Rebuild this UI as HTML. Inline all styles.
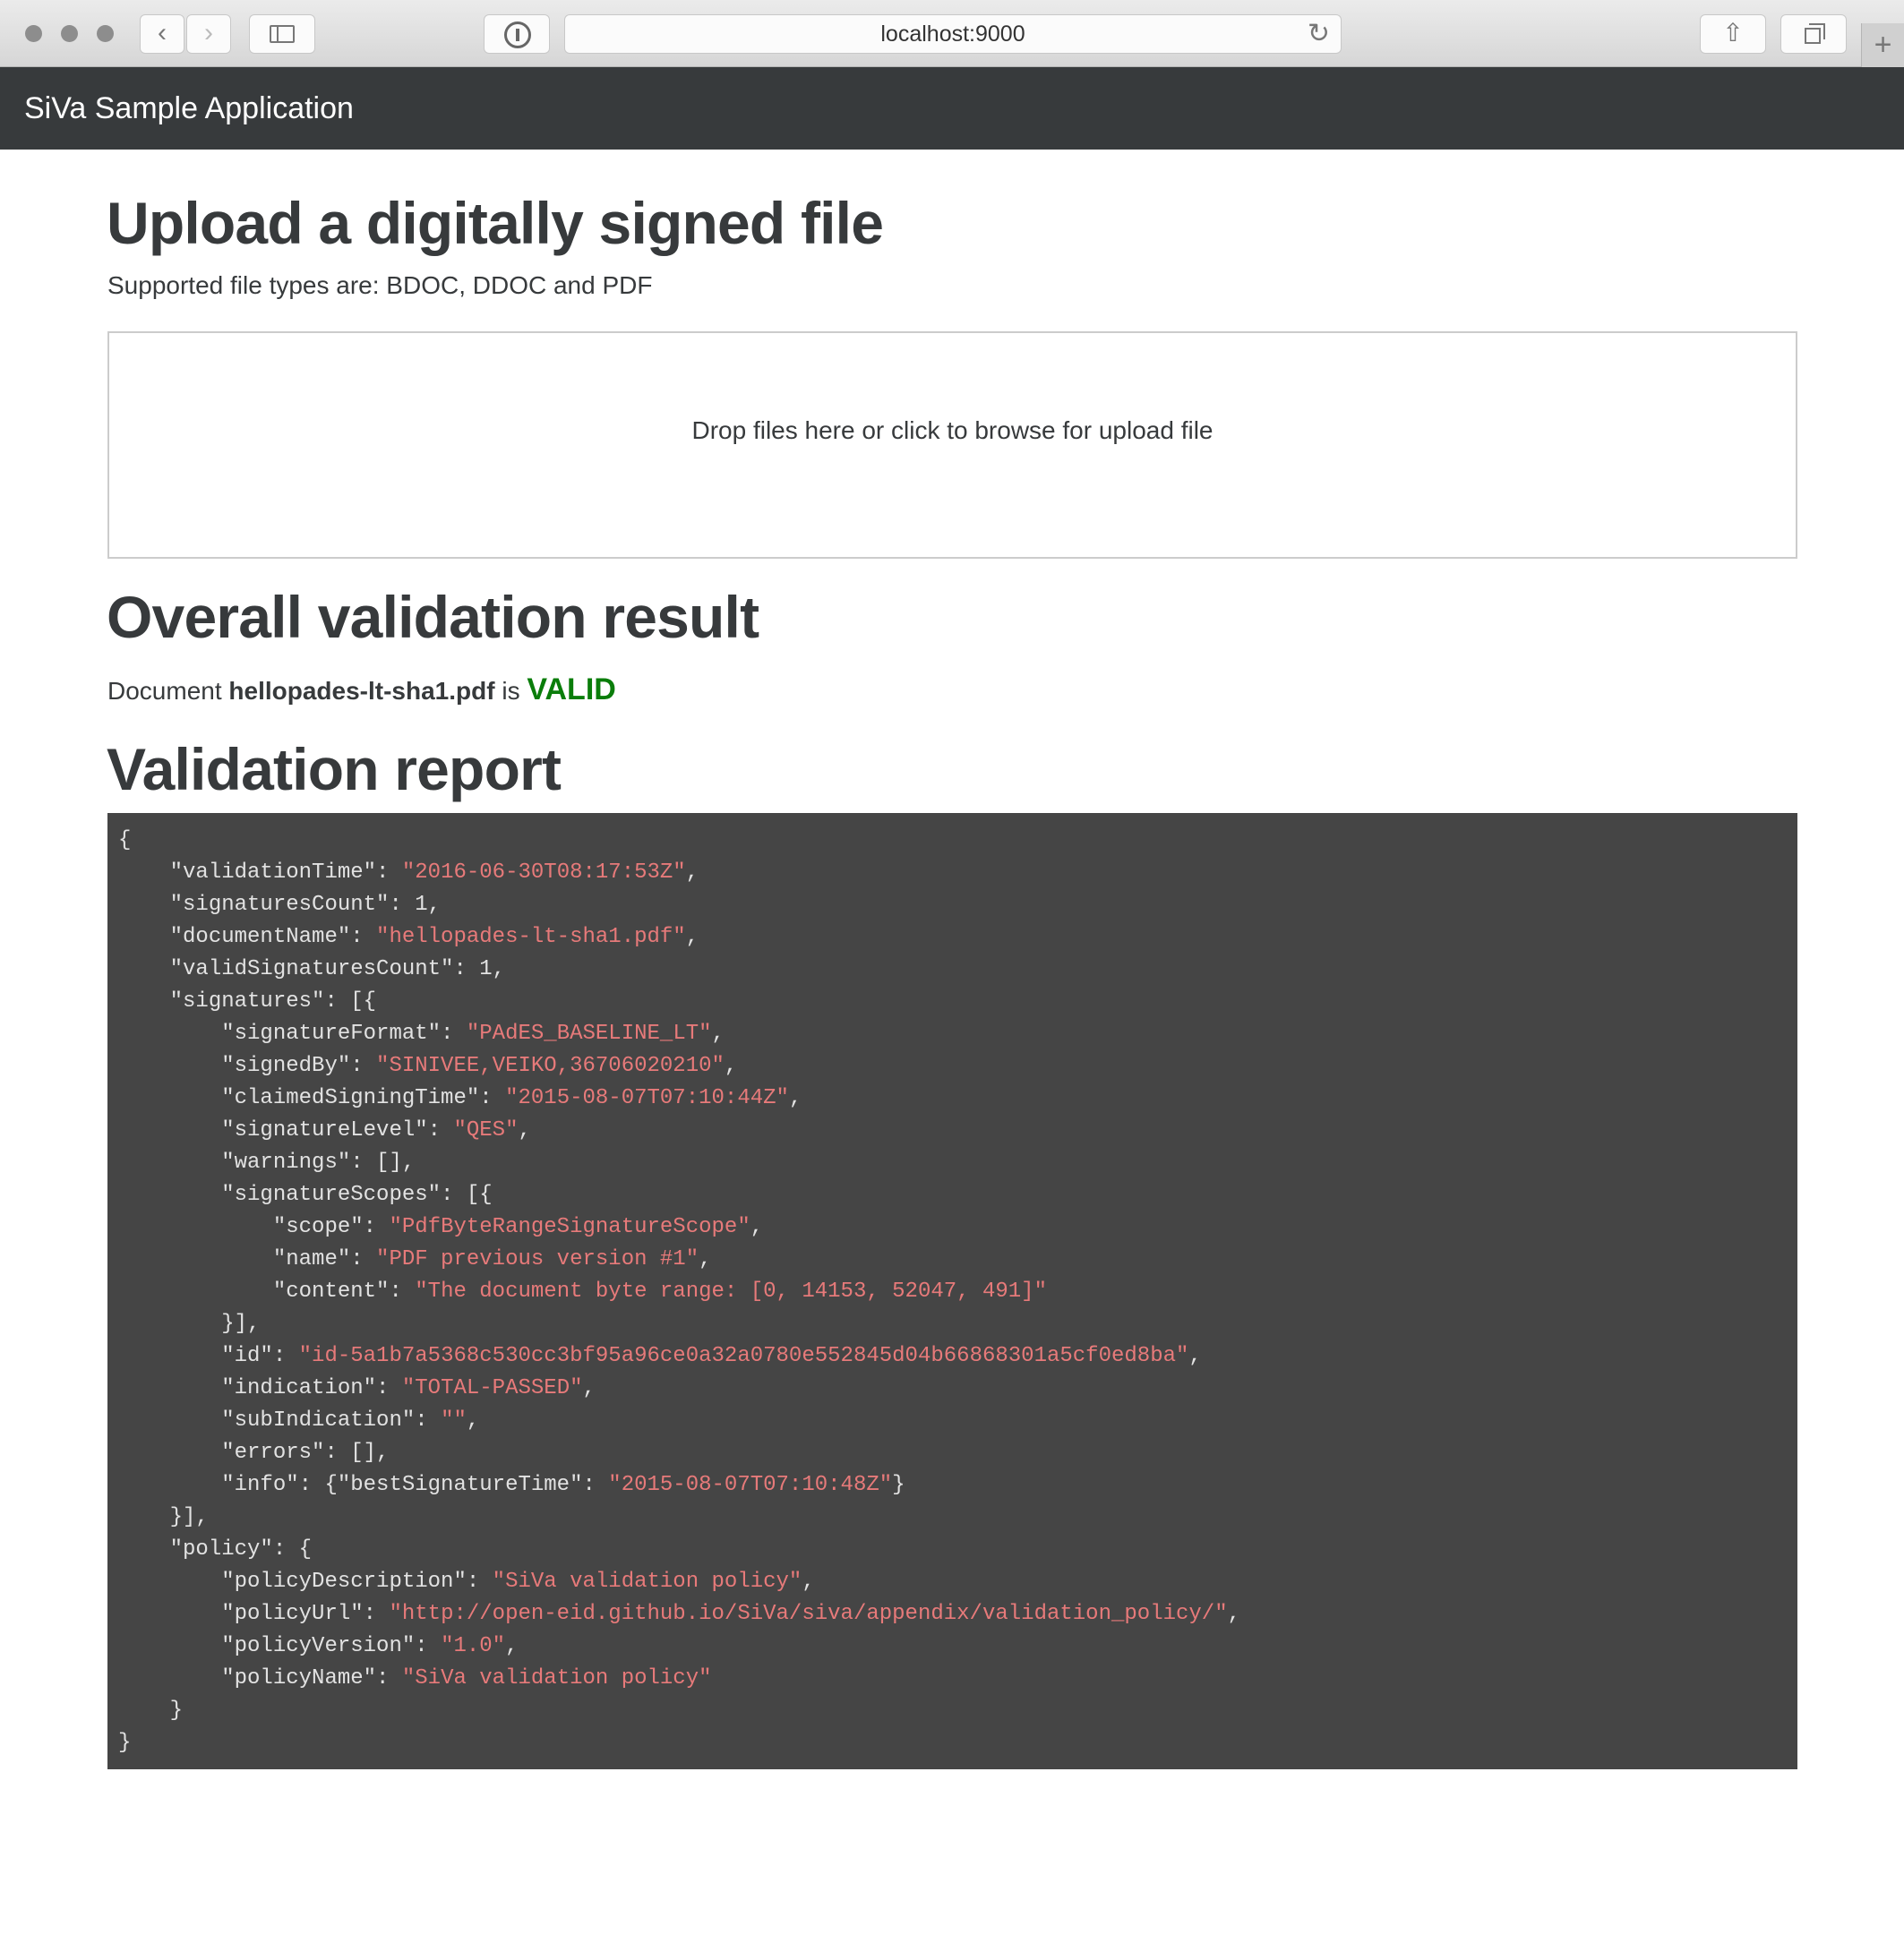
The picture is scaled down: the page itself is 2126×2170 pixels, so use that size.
<!DOCTYPE html>
<html><head><meta charset="utf-8"><style>
*{margin:0;padding:0;box-sizing:border-box}
body{width:2126px;height:2170px;background:#fff;font-family:"Liberation Sans",Arial,sans-serif;color:#373a3c;position:relative;overflow:hidden}
.abs{position:absolute;white-space:nowrap}
.tb{position:absolute;left:0;top:0;width:2126px;height:75px;background:linear-gradient(#ebebeb,#d6d6d6);border-bottom:1px solid #b5b5b5}
.dot{position:absolute;top:28px;width:19px;height:19px;border-radius:50%;background:#8d8d8d}
.btn{position:absolute;top:16px;height:44px;background:#fbfbfb;border:1px solid #c8c8c8;border-radius:6px}
.nav{position:absolute;left:0;top:75px;width:2126px;height:92px;background:#373a3c;color:#fff;font-size:34px;padding-left:27px;line-height:92px}
h1{position:absolute;left:119px;font-size:66px;font-weight:bold;letter-spacing:-0.8px;white-space:nowrap;line-height:1}
.p{font-size:28px}
.drop{position:absolute;left:120px;top:370px;width:1887px;height:254px;border:2px solid #ccc;text-align:center;font-size:28px;line-height:218px}
.code{position:absolute;left:120px;top:908px;width:1887px;height:1068px;background:#454545;padding:13px 12px;font-family:"Liberation Mono","DejaVu Sans Mono",monospace;font-size:24px;line-height:36px;color:#e2e2e2;white-space:pre}
.s{color:#e77a7a}
</style></head><body>
<div class="tb">
<div class="dot" style="left:28px"></div><div class="dot" style="left:68px"></div><div class="dot" style="left:108px"></div>
<div class="btn" style="left:156px;width:50px;text-align:center;font-size:30px;line-height:40px;color:#777">&#8249;</div>
<div class="btn" style="left:208px;width:50px;text-align:center;font-size:30px;line-height:40px;color:#bbb">&#8250;</div>
<div class="btn" style="left:278px;width:74px"><div style="position:absolute;left:22px;top:11px;width:28px;height:20px;border:2px solid #777;border-radius:2px"></div><div style="position:absolute;left:30px;top:11px;width:2px;height:20px;background:#777"></div></div>
<div class="btn" style="left:540px;width:74px"><div style="position:absolute;left:22px;top:7px;width:30px;height:30px;border:3px solid #666;border-radius:50%"></div><div style="position:absolute;left:35px;top:15px;width:4px;height:14px;background:#666"></div></div>
<div class="btn" style="left:630px;width:868px;text-align:center;font-size:25px;line-height:42px;color:#333">localhost:9000<span style="position:absolute;right:12px;top:0;color:#777;font-size:30px">&#8635;</span></div>
<div class="btn" style="left:1898px;width:74px;text-align:center;font-size:28px;line-height:40px;color:#777">&#8679;</div>
<div class="btn" style="left:1988px;width:74px"><div style="position:absolute;left:26px;top:14px;width:18px;height:18px;border:2px solid #777"></div><div style="position:absolute;left:31px;top:9px;width:18px;height:18px;border-top:2px solid #777;border-right:2px solid #777"></div></div>
<div style="position:absolute;left:2078px;top:26px;width:48px;height:49px;background:#d0d0d0;border-left:1px solid #b5b5b5;text-align:center;font-size:34px;line-height:48px;color:#777">+</div>
</div>
<div class="nav">SiVa Sample Application</div>
<h1 style="top:216px">Upload a digitally signed file</h1>
<div class="abs p" style="left:120px;top:303px">Supported file types are: BDOC, DDOC and PDF</div>
<div class="drop">Drop files here or click to browse for upload file</div>
<h1 style="top:656px">Overall validation result</h1>
<div class="abs p" style="left:120px;top:751px">Document <b>hellopades-lt-sha1.pdf</b> is <b style="color:#0a7d0a;font-size:34px">VALID</b></div>
<h1 style="top:826px">Validation report</h1>
<div class="code">{
    "validationTime": <span class="s">"2016-06-30T08:17:53Z"</span>,
    "signaturesCount": 1,
    "documentName": <span class="s">"hellopades-lt-sha1.pdf"</span>,
    "validSignaturesCount": 1,
    "signatures": [{
        "signatureFormat": <span class="s">"PAdES_BASELINE_LT"</span>,
        "signedBy": <span class="s">"SINIVEE,VEIKO,36706020210"</span>,
        "claimedSigningTime": <span class="s">"2015-08-07T07:10:44Z"</span>,
        "signatureLevel": <span class="s">"QES"</span>,
        "warnings": [],
        "signatureScopes": [{
            "scope": <span class="s">"PdfByteRangeSignatureScope"</span>,
            "name": <span class="s">"PDF previous version #1"</span>,
            "content": <span class="s">"The document byte range: [0, 14153, 52047, 491]"</span>
        }],
        "id": <span class="s">"id-5a1b7a5368c530cc3bf95a96ce0a32a0780e552845d04b66868301a5cf0ed8ba"</span>,
        "indication": <span class="s">"TOTAL-PASSED"</span>,
        "subIndication": <span class="s">""</span>,
        "errors": [],
        "info": {"bestSignatureTime": <span class="s">"2015-08-07T07:10:48Z"</span>}
    }],
    "policy": {
        "policyDescription": <span class="s">"SiVa validation policy"</span>,
        "policyUrl": <span class="s">"http://open-eid.github.io/SiVa/siva/appendix/validation_policy/"</span>,
        "policyVersion": <span class="s">"1.0"</span>,
        "policyName": <span class="s">"SiVa validation policy"</span>
    }
}</div>
</body></html>
